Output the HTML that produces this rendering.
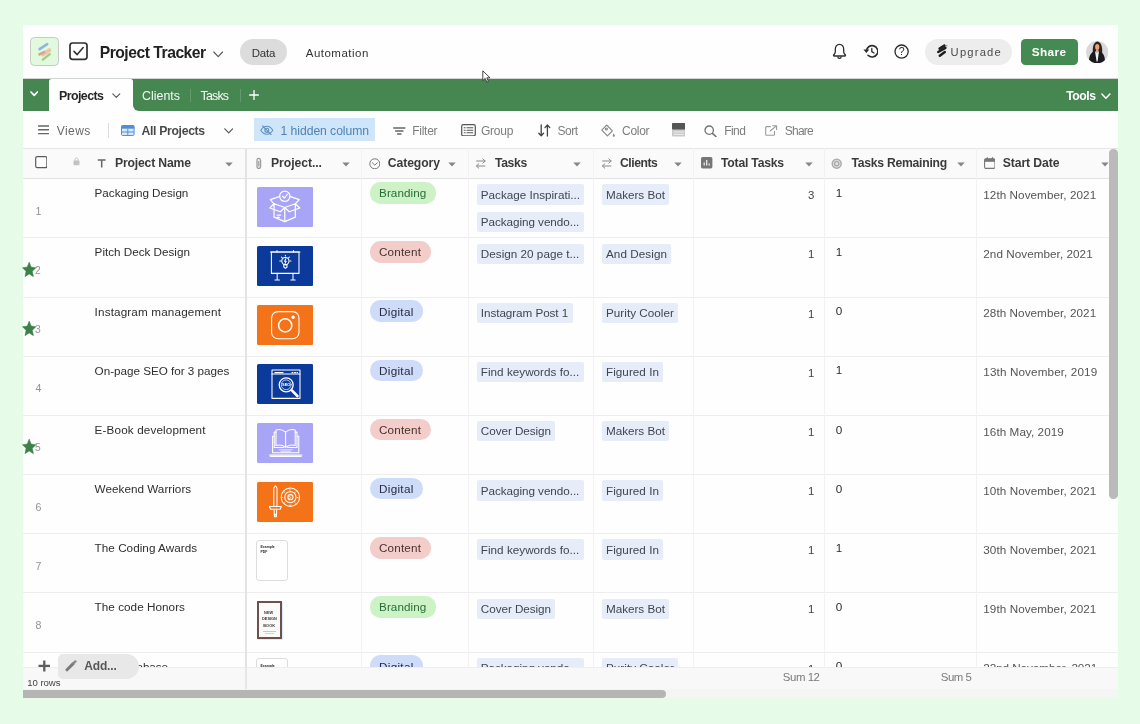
<!DOCTYPE html>
<html lang="en"><head><meta charset="utf-8"><title>Project Tracker</title>
<style>
html,body{margin:0;padding:0}
body{width:1140px;height:724px;overflow:hidden;position:relative;background:#e6fce8;font-family:"Liberation Sans",sans-serif;}
.b{position:absolute;display:block;box-sizing:border-box}
.t{position:absolute;white-space:pre;line-height:1;display:block}
#wrap{position:absolute;left:0;top:0;width:1140px;height:724px;will-change:transform}
</style></head><body><div id="wrap">
<div class="b" style="left:23.0px;top:25.0px;width:1095.4px;height:673.3px;background:#fefefe;"></div>
<div class="b" style="left:30.3px;top:36.5px;width:28.9px;height:29.0px;background:#e1f9dd;border:1.4px solid #c7cac7;border-radius:4.5px;"></div>
<svg class="b" style="left:30.3px;top:36.5px;" width="29" height="29" viewBox="0 0 29 29"><g stroke-linecap="round" fill="none"><path d="M12.8 17.6 L19.4 13.2" stroke="#f3c2a4" stroke-width="3.8"/><path d="M9.4 17.4 L14 15.2" stroke="#d9a48c" stroke-width="2.6"/><path d="M9.6 12.2 L17.2 7.2" stroke="#8fb5e6" stroke-width="2.6"/><path d="M12.8 22.6 L19.8 17.2" stroke="#9bcf88" stroke-width="2.3"/></g></svg>
<svg class="b" style="left:68.6px;top:42.2px;" width="19" height="18.6" viewBox="0 0 19 18.6"><rect x="1" y="1" width="17" height="16.4" rx="2.6" fill="none" stroke="#2f2f2f" stroke-width="1.7"/><path d="M5 9.4 L8.2 12.6 L14.2 5.6" fill="none" stroke="#2f2f2f" stroke-width="1.5" stroke-linecap="round" stroke-linejoin="round"/></svg>
<span class="t" style="left:99.7px;top:44px;font-size:15.7px;line-height:17px;color:#222;font-weight:700;letter-spacing:-0.49px;">Project Tracker</span>
<svg class="b" style="left:213.0px;top:50.5px;" width="10.4" height="7" viewBox="0 0 10.4 7"><path d="M0.8 1 L5.2 5.6 L9.6 1" fill="none" stroke="#555" stroke-width="1.1" stroke-linecap="round" stroke-linejoin="round"/></svg>
<div class="b" style="left:240.3px;top:38.8px;width:46.8px;height:26.0px;background:#dcdcdc;border-radius:13px;"></div>
<span class="t" style="left:251.7px;top:47px;font-size:11.5px;line-height:12px;color:#333;letter-spacing:-0.23px;">Data</span>
<span class="t" style="left:305.8px;top:47px;font-size:11.5px;line-height:12px;color:#333;letter-spacing:0.48px;">Automation</span>
<svg class="b" style="left:832.0px;top:42.5px;" width="15" height="16.6" viewBox="0 0 15 16.6"><path d="M7.5 1.4 C4.6 1.4 3.3 3.8 3.3 6.4 L3.3 9 C3.3 10.4 2.3 11 1.6 12 C1.3 12.6 1.6 13 2.2 13 L12.8 13 C13.4 13 13.7 12.6 13.4 12 C12.7 11 11.7 10.4 11.7 9 L11.7 6.4 C11.7 3.8 10.4 1.4 7.5 1.4 Z" fill="none" stroke="#2c2c2c" stroke-width="1.3" stroke-linejoin="round"/><path d="M5.8 13.4 C5.8 14.6 6.6 15.4 7.5 15.4 C8.4 15.4 9.2 14.6 9.2 13.4" fill="none" stroke="#2c2c2c" stroke-width="1.3"/></svg>
<svg class="b" style="left:862.8px;top:43.6px;" width="15.4" height="14.6" viewBox="0 0 15.4 14.6"><path d="M3.4 7.2 A5.7 5.7 0 1 1 5 11.3" fill="none" stroke="#2c2c2c" stroke-width="1.6" stroke-linecap="round"/><path d="M0.4 5.6 L3.4 9 L6.3 5.6 Z" fill="#2c2c2c"/><path d="M8.8 4.4 L8.8 7.6 L11 9" fill="none" stroke="#2c2c2c" stroke-width="1.3" stroke-linecap="round" stroke-linejoin="round"/></svg>
<svg class="b" style="left:894.0px;top:44.2px;" width="15.2" height="15.2" viewBox="0 0 15.2 15.2"><circle cx="7.6" cy="7.6" r="6.6" fill="none" stroke="#2c2c2c" stroke-width="1.3"/><text x="7.6" y="11.2" font-size="10.6" text-anchor="middle" fill="#2c2c2c" font-family="Liberation Sans, sans-serif">?</text></svg>
<div class="b" style="left:925.0px;top:38.8px;width:87.4px;height:26.2px;background:#ededed;border-radius:13px;"></div>
<svg class="b" style="left:936.0px;top:43.0px;" width="12.4" height="14.6" viewBox="0 0 12.4 14.6"><g stroke="#1e1e1e" stroke-width="2.5" stroke-linecap="round"><path d="M3.6 5.6 L8.4 2.6"/><path d="M2.2 9 L9.4 4.8"/><path d="M3.8 12.8 L8.8 9"/></g><circle cx="10.8" cy="2.8" r="0.5" fill="#1e1e1e"/></svg>
<span class="t" style="left:950.6px;top:46px;font-size:11.2px;line-height:12px;color:#4a4a4a;letter-spacing:1.21px;">Upgrade</span>
<div class="b" style="left:1020.5px;top:39.2px;width:57.7px;height:25.4px;background:#448a52;border-radius:4.5px;"></div>
<span class="t" style="left:1031.8px;top:45px;font-size:11.8px;line-height:14px;color:#fff;font-weight:700;letter-spacing:0.35px;">Share</span>
<svg class="b" style="left:1086.3px;top:40.5px;" width="22.4" height="22.4" viewBox="0 0 22.4 22.4"><defs><clipPath id="av"><circle cx="11.2" cy="11.2" r="11.1"/></clipPath></defs>
<g clip-path="url(#av)"><rect width="22.4" height="22.4" fill="#d9d9d9"/>
<path d="M7 13.4 C6.2 8 7 0.8 11.4 0.5 C15.8 0.8 16.8 8 16 13.4 Z" fill="#2b2321"/>
<ellipse cx="11.2" cy="5.9" rx="2.1" ry="2.9" fill="#e9a574"/>
<path d="M10 8.4 H12.4 V11 H10 Z" fill="#e2a77f"/>
<path d="M3 22.4 C2.6 14.6 5 11.2 8.8 10.2 L11 13 L13.2 10.2 C17 11.2 19.4 14.6 19 22.4 Z" fill="#1b1b1d"/>
<path d="M9 10.2 L10.6 20.4 L11.6 20.4 L13 10.2 L11 11.4 Z" fill="#f2f2f2"/></g></svg>
<div class="b" style="left:23.0px;top:78.2px;width:1095.4px;height:1.0px;background:#d2d6d2;"></div>
<div class="b" style="left:23.0px;top:78.8px;width:1095.4px;height:32.4px;background:#468650;"></div>
<div class="b" style="left:48.8px;top:79.3px;width:83.8px;height:32.0px;background:#fefefe;border-radius:2.5px 2.5px 0 0;"></div>
<div class="b" style="left:132.6px;top:105.2px;width:6.0px;height:6.0px;background:#fefefe;"></div>
<div class="b" style="left:132.6px;top:105.2px;width:6.0px;height:6.0px;background:#468650;border-bottom-left-radius:6px;"></div>
<svg class="b" style="left:30.1px;top:91.0px;" width="8.4" height="6" viewBox="0 0 8.4 6"><path d="M1 1 L4.2 4.4 L7.4 1" fill="none" stroke="#fff" stroke-width="1.7" stroke-linecap="round" stroke-linejoin="round"/></svg>
<span class="t" style="left:59.0px;top:89px;font-size:12.4px;line-height:14px;color:#262626;font-weight:700;letter-spacing:-0.56px;">Projects</span>
<svg class="b" style="left:112.0px;top:92.8px;" width="8.6" height="5.6" viewBox="0 0 8.6 5.6"><path d="M0.8 0.8 L4.3 4.4 L7.8 0.8" fill="none" stroke="#555" stroke-width="1.1" stroke-linecap="round" stroke-linejoin="round"/></svg>
<span class="t" style="left:142.0px;top:89px;font-size:12.4px;line-height:14px;color:#f4faf5;letter-spacing:0.02px;">Clients</span>
<div class="b" style="left:189.6px;top:89.0px;width:1.0px;height:13.0px;background:rgba(255,255,255,0.16);"></div>
<span class="t" style="left:200.5px;top:89px;font-size:12.4px;line-height:14px;color:#f4faf5;letter-spacing:-0.80px;">Tasks</span>
<div class="b" style="left:239.6px;top:89.0px;width:1.0px;height:13.0px;background:rgba(255,255,255,0.16);"></div>
<svg class="b" style="left:249.0px;top:90.4px;" width="10" height="10" viewBox="0 0 10 10"><path d="M5 0.6 L5 9.4 M0.6 5 L9.4 5" stroke="#fff" stroke-width="1.3" stroke-linecap="round"/></svg>
<span class="t" style="left:1066.3px;top:89px;font-size:12.2px;line-height:14px;color:#fff;font-weight:700;letter-spacing:-0.48px;">Tools</span>
<svg class="b" style="left:1101.2px;top:93.2px;" width="9.8" height="6.6" viewBox="0 0 9.8 6.6"><path d="M0.9 1 L4.9 5.2 L8.9 1" fill="none" stroke="#fff" stroke-width="1.5" stroke-linecap="round" stroke-linejoin="round"/></svg>
<svg class="b" style="left:37.6px;top:125.4px;" width="11.6" height="9.6" viewBox="0 0 11.6 9.6"><path d="M0.6 1 H11 M0.6 4.8 H11 M0.6 8.6 H11" stroke="#666" stroke-width="1.4" stroke-linecap="round"/></svg>
<span class="t" style="left:56.7px;top:124px;font-size:12px;line-height:14px;color:#6a6a6a;letter-spacing:0.45px;">Views</span>
<div class="b" style="left:108.4px;top:122.5px;width:1.0px;height:15.0px;background:#dcdcdc;"></div>
<svg class="b" style="left:121.0px;top:124.8px;" width="13.6" height="11" viewBox="0 0 13.6 11"><rect x="0.5" y="0.5" width="12.6" height="10" rx="1.2" fill="#dbeafa" stroke="#4f8fd6" stroke-width="1"/><rect x="0.5" y="0.5" width="12.6" height="3.2" fill="#4f8fd6"/><path d="M6.8 3.6 V10.4 M0.6 7 H13" stroke="#4f8fd6" stroke-width="1"/></svg>
<span class="t" style="left:141.5px;top:124px;font-size:12.2px;line-height:14px;color:#4a4a4a;font-weight:700;letter-spacing:-0.31px;">All Projects</span>
<svg class="b" style="left:223.6px;top:127.6px;" width="9.4" height="6" viewBox="0 0 9.4 6"><path d="M0.8 0.8 L4.7 4.8 L8.6 0.8" fill="none" stroke="#555" stroke-width="1.2" stroke-linecap="round" stroke-linejoin="round"/></svg>
<div class="b" style="left:253.9px;top:118.4px;width:121.6px;height:23.0px;background:#cfe5f9;"></div>
<svg class="b" style="left:260.4px;top:124.6px;" width="13.6" height="10.4" viewBox="0 0 13.6 10.4"><g fill="none" stroke="#5b8fc0" stroke-width="1.1" stroke-linecap="round"><path d="M0.8 5.2 C2.6 2.2 5 1.2 6.8 1.2 C8.6 1.2 11 2.2 12.8 5.2 C11 8.2 8.6 9.2 6.8 9.2 C5 9.2 2.6 8.2 0.8 5.2 Z"/><circle cx="6.8" cy="5.2" r="2"/><path d="M2.6 0.8 L11.2 9.8"/></g></svg>
<span class="t" style="left:280.6px;top:124px;font-size:12.2px;line-height:14px;color:#4e84b6;letter-spacing:-0.07px;">1 hidden column</span>
<svg class="b" style="left:393.0px;top:126.8px;" width="12.6" height="8" viewBox="0 0 12.6 8"><path d="M0.7 1 H11.9 M2.6 4 H10 M4.6 7 H8" stroke="#666" stroke-width="1.3" stroke-linecap="round"/></svg>
<span class="t" style="left:412.2px;top:124px;font-size:12px;line-height:14px;color:#7d7d7d;letter-spacing:-0.25px;">Filter</span>
<svg class="b" style="left:460.6px;top:123.8px;" width="15" height="12.6" viewBox="0 0 15 12.6"><rect x="0.7" y="0.7" width="13.6" height="11.2" rx="1.6" fill="none" stroke="#555" stroke-width="1.2"/><path d="M3.2 3.8 H4.2 M3.2 6.3 H4.2 M3.2 8.8 H4.2 M6 3.8 H11.8 M6 6.3 H11.8 M6 8.8 H11.8" stroke="#555" stroke-width="1.1" stroke-linecap="round"/></svg>
<span class="t" style="left:481.0px;top:124px;font-size:12px;line-height:14px;color:#7d7d7d;letter-spacing:-0.24px;">Group</span>
<svg class="b" style="left:538.2px;top:123.8px;" width="13" height="13" viewBox="0 0 13 13"><g fill="none" stroke="#444" stroke-width="1.3" stroke-linecap="round" stroke-linejoin="round"><path d="M3.2 0.8 V11.6 M0.8 9.2 L3.2 11.8 L5.6 9.2"/><path d="M9.4 12 V1.2 M7 3.6 L9.4 1 L11.8 3.6"/></g></svg>
<span class="t" style="left:557.6px;top:124px;font-size:12px;line-height:14px;color:#7d7d7d;letter-spacing:-0.54px;">Sort</span>
<svg class="b" style="left:600.6px;top:123.6px;" width="14.6" height="13" viewBox="0 0 14.6 13"><g fill="none" stroke="#858585" stroke-width="1.1" stroke-linejoin="round"><path d="M5.6 1 L11.4 6.8 L6.4 11.8 L0.8 6.2 Z"/><circle cx="5.4" cy="5" r="1"/></g><path d="M12.6 9.2 C13.6 10.6 13.8 11.4 13.8 11.8 C13.8 12.4 13.3 12.8 12.8 12.8 C12.2 12.8 11.8 12.4 11.8 11.8 C11.8 11.4 12 10.6 12.6 9.2 Z" fill="#858585"/></svg>
<span class="t" style="left:622.0px;top:124px;font-size:12px;line-height:14px;color:#7d7d7d;letter-spacing:-0.29px;">Color</span>
<svg class="b" style="left:671.8px;top:123.0px;" width="13.4" height="13.6" viewBox="0 0 13.4 13.6"><rect x="0" y="0" width="13.4" height="13.6" rx="1" fill="#c9c9c9"/><rect x="0" y="0" width="13.4" height="6.6" rx="1" fill="#555"/><path d="M1.6 9 H11.8 M1.6 11.4 H11.8" stroke="#efefef" stroke-width="1"/></svg>
<svg class="b" style="left:704.2px;top:124.6px;" width="13" height="12.4" viewBox="0 0 13 12.4"><circle cx="5.2" cy="5.2" r="4.2" fill="none" stroke="#727272" stroke-width="1.3"/><path d="M8.4 8.4 L12 11.6" stroke="#727272" stroke-width="1.5" stroke-linecap="round"/></svg>
<span class="t" style="left:724.3px;top:124px;font-size:12px;line-height:14px;color:#7d7d7d;letter-spacing:-0.61px;">Find</span>
<svg class="b" style="left:765.4px;top:125.2px;" width="12.4" height="11" viewBox="0 0 12.4 11"><g fill="none" stroke="#9a9a9a" stroke-width="1.1" stroke-linecap="round" stroke-linejoin="round"><path d="M5.4 1.6 H1.6 C1 1.6 0.7 2 0.7 2.6 V9.4 C0.7 10 1 10.3 1.6 10.3 H8.6 C9.2 10.3 9.5 10 9.5 9.4 V6.4"/><path d="M5.2 6 L11.4 0.8 M7.8 0.7 H11.6 V4.4"/></g></svg>
<span class="t" style="left:784.7px;top:124px;font-size:12px;line-height:14px;color:#7d7d7d;letter-spacing:-0.73px;">Share</span>
<div class="b" style="left:23.0px;top:148.3px;width:1095.4px;height:30.9px;background:#fafafa;border-top:1px solid #e6e6e6;border-bottom:1px solid #e2e2e2;"></div>
<div class="b" style="left:23.0px;top:237.4px;width:1095.4px;height:1.0px;background:#eeeeee;"></div>
<div class="b" style="left:23.0px;top:296.5px;width:1095.4px;height:1.0px;background:#eeeeee;"></div>
<div class="b" style="left:23.0px;top:355.7px;width:1095.4px;height:1.0px;background:#eeeeee;"></div>
<div class="b" style="left:23.0px;top:414.8px;width:1095.4px;height:1.0px;background:#eeeeee;"></div>
<div class="b" style="left:23.0px;top:474.0px;width:1095.4px;height:1.0px;background:#eeeeee;"></div>
<div class="b" style="left:23.0px;top:533.2px;width:1095.4px;height:1.0px;background:#eeeeee;"></div>
<div class="b" style="left:23.0px;top:592.3px;width:1095.4px;height:1.0px;background:#eeeeee;"></div>
<div class="b" style="left:23.0px;top:651.5px;width:1095.4px;height:1.0px;background:#eeeeee;"></div>
<div class="b" style="left:245.0px;top:148.3px;width:2.0px;height:518.9px;background:#e3e3e3;"></div>
<div class="b" style="left:361.1px;top:148.3px;width:1.0px;height:518.9px;background:#f2f2f2;"></div>
<div class="b" style="left:467.5px;top:148.3px;width:1.0px;height:518.9px;background:#f2f2f2;"></div>
<div class="b" style="left:592.7px;top:148.3px;width:1.0px;height:518.9px;background:#f2f2f2;"></div>
<div class="b" style="left:693.1px;top:148.3px;width:1.0px;height:518.9px;background:#f2f2f2;"></div>
<div class="b" style="left:823.8px;top:148.3px;width:1.0px;height:518.9px;background:#f2f2f2;"></div>
<div class="b" style="left:975.5px;top:148.3px;width:1.0px;height:518.9px;background:#f2f2f2;"></div>
<svg class="b" style="left:34.6px;top:156.4px;" width="12.6" height="12.4" viewBox="0 0 12.6 12.4"><rect x="0.7" y="0.7" width="11.2" height="11" rx="1.6" fill="#fff" stroke="#5a5a5a" stroke-width="1.2"/></svg>
<svg class="b" style="left:73.4px;top:157.2px;" width="7" height="8.6" viewBox="0 0 7 8.6"><rect x="0.5" y="3.6" width="6" height="4.6" rx="0.8" fill="#c2c2c2"/><path d="M2 3.8 V2.6 C2 1.5 2.7 1 3.5 1 C4.3 1 5 1.5 5 2.6 V3.8" fill="none" stroke="#c2c2c2" stroke-width="1"/></svg>
<svg class="b" style="left:97.0px;top:158.6px;" width="9.4" height="9" viewBox="0 0 9.4 9"><path d="M0.8 1 H8.6 M4.7 1 V8.6" stroke="#666" stroke-width="1.5" fill="none"/></svg>
<span class="t" style="left:115.0px;top:156px;font-size:12.2px;line-height:14px;color:#3b3b3b;font-weight:700;letter-spacing:-0.18px;">Project Name</span>
<svg class="b" style="left:225.0px;top:162.2px;" width="8" height="5" viewBox="0 0 8 5"><path d="M0.3 0.6 L7.7 0.6 L4 4.6 Z" fill="#858585"/></svg>
<svg class="b" style="left:255.4px;top:156.8px;" width="7.6" height="13" viewBox="0 0 7.6 13"><path d="M5.6 3.6 V9.2 C5.6 10.6 4.8 11.4 3.8 11.4 C2.8 11.4 2 10.6 2 9.2 V3.4 C2 2.2 2.7 1.4 3.7 1.4 C4.7 1.4 5.4 2.2 5.4 3.4 M3.8 4.4 V9" fill="none" stroke="#9a9a9a" stroke-width="1.25" stroke-linecap="round"/></svg>
<span class="t" style="left:271.0px;top:156px;font-size:12.2px;line-height:14px;color:#3b3b3b;font-weight:700;letter-spacing:-0.06px;">Project...</span>
<svg class="b" style="left:341.6px;top:162.2px;" width="8" height="5" viewBox="0 0 8 5"><path d="M0.3 0.6 L7.7 0.6 L4 4.6 Z" fill="#858585"/></svg>
<svg class="b" style="left:368.6px;top:157.6px;" width="11.6" height="11.6" viewBox="0 0 11.6 11.6"><circle cx="5.8" cy="5.8" r="5" fill="none" stroke="#777" stroke-width="1"/><path d="M3.4 4.8 L5.8 7.2 L8.2 4.8" fill="none" stroke="#777" stroke-width="1" stroke-linecap="round" stroke-linejoin="round"/></svg>
<span class="t" style="left:387.8px;top:156px;font-size:12.2px;line-height:14px;color:#3b3b3b;font-weight:700;letter-spacing:-0.10px;">Category</span>
<svg class="b" style="left:447.6px;top:162.2px;" width="8" height="5" viewBox="0 0 8 5"><path d="M0.3 0.6 L7.7 0.6 L4 4.6 Z" fill="#858585"/></svg>
<svg class="b" style="left:475.0px;top:157.6px;" width="11.6" height="11" viewBox="0 0 11.6 11"><g fill="none" stroke="#8a8a8a" stroke-width="1" stroke-linecap="round" stroke-linejoin="round"><path d="M1.6 3 H10 M7.8 0.8 L10.2 3 L7.8 5.2"/><path d="M10 8 H1.6 M3.8 5.8 L1.4 8 L3.8 10.2"/></g></svg>
<span class="t" style="left:495.0px;top:156px;font-size:12.2px;line-height:14px;color:#3b3b3b;font-weight:700;letter-spacing:-0.35px;">Tasks</span>
<svg class="b" style="left:573.0px;top:162.2px;" width="8" height="5" viewBox="0 0 8 5"><path d="M0.3 0.6 L7.7 0.6 L4 4.6 Z" fill="#858585"/></svg>
<svg class="b" style="left:600.8px;top:157.6px;" width="11.6" height="11" viewBox="0 0 11.6 11"><g fill="none" stroke="#8a8a8a" stroke-width="1" stroke-linecap="round" stroke-linejoin="round"><path d="M1.6 3 H10 M7.8 0.8 L10.2 3 L7.8 5.2"/><path d="M10 8 H1.6 M3.8 5.8 L1.4 8 L3.8 10.2"/></g></svg>
<span class="t" style="left:620.0px;top:156px;font-size:12.2px;line-height:14px;color:#3b3b3b;font-weight:700;letter-spacing:-0.46px;">Clients</span>
<svg class="b" style="left:673.6px;top:162.2px;" width="8" height="5" viewBox="0 0 8 5"><path d="M0.3 0.6 L7.7 0.6 L4 4.6 Z" fill="#858585"/></svg>
<svg class="b" style="left:701.4px;top:157.4px;" width="11.4" height="11.4" viewBox="0 0 11.4 11.4"><rect x="0" y="0" width="11.4" height="11.4" rx="1.6" fill="#767676"/><path d="M3.2 8.6 V5.6 M5.7 8.6 V3 M8.2 8.6 V6.6" stroke="#f2f2f2" stroke-width="1.2"/></svg>
<span class="t" style="left:721.0px;top:156px;font-size:12.2px;line-height:14px;color:#3b3b3b;font-weight:700;letter-spacing:-0.21px;">Total Tasks</span>
<svg class="b" style="left:804.6px;top:162.2px;" width="8" height="5" viewBox="0 0 8 5"><path d="M0.3 0.6 L7.7 0.6 L4 4.6 Z" fill="#858585"/></svg>
<svg class="b" style="left:831.4px;top:157.6px;" width="11.4" height="11.4" viewBox="0 0 11.4 11.4"><circle cx="5.7" cy="5.7" r="5.2" fill="#ababab"/><circle cx="5.7" cy="5.7" r="3.4" fill="none" stroke="#e8e8e8" stroke-width="0.9"/><circle cx="5.7" cy="5.7" r="1.4" fill="#e8e8e8"/></svg>
<span class="t" style="left:851.4px;top:156px;font-size:12.2px;line-height:14px;color:#3b3b3b;font-weight:700;letter-spacing:-0.25px;">Tasks Remaining</span>
<svg class="b" style="left:956.6px;top:162.2px;" width="8" height="5" viewBox="0 0 8 5"><path d="M0.3 0.6 L7.7 0.6 L4 4.6 Z" fill="#858585"/></svg>
<svg class="b" style="left:983.6px;top:157.2px;" width="11.6" height="12" viewBox="0 0 11.6 12"><rect x="0.6" y="1.8" width="10.4" height="9.6" rx="1.4" fill="none" stroke="#777" stroke-width="1.1"/><rect x="0.6" y="1.8" width="10.4" height="3" fill="#777"/><path d="M3.2 0.6 V2.4 M8.4 0.6 V2.4" stroke="#777" stroke-width="1.1" stroke-linecap="round"/></svg>
<span class="t" style="left:1002.7px;top:156px;font-size:12.2px;line-height:14px;color:#3b3b3b;font-weight:700;letter-spacing:-0.09px;">Start Date</span>
<svg class="b" style="left:1101.4px;top:162.2px;" width="8" height="5" viewBox="0 0 8 5"><path d="M0.3 0.6 L7.7 0.6 L4 4.6 Z" fill="#858585"/></svg>
<span class="t" style="left:35.6px;top:205px;font-size:10.6px;line-height:12px;color:#929292;">1</span>
<span class="t" style="left:94.6px;top:186px;font-size:11.7px;line-height:13px;color:#2e2e2e;letter-spacing:-0.03px;">Packaging Design</span>
<div class="b" style="left:370.0px;top:182.1px;width:66.0px;height:21.6px;background:#cdf2c5;border-radius:10.7px;"></div>
<span class="t" style="left:379.0px;top:186px;font-size:11.7px;line-height:13px;color:#2a6e37;letter-spacing:0.08px;">Branding</span>
<div class="b" style="left:476.7px;top:184.4px;width:107.7px;height:20.4px;background:#e7edf8;border-radius:2px;"></div>
<span class="t" style="left:480.8px;top:188px;font-size:11.7px;line-height:13px;color:#3f4652;letter-spacing:-0.01px;">Package Inspirati...</span>
<div class="b" style="left:476.7px;top:212.1px;width:107.0px;height:20.4px;background:#e7edf8;border-radius:2px;"></div>
<span class="t" style="left:480.8px;top:215px;font-size:11.7px;line-height:13px;color:#3f4652;letter-spacing:-0.05px;">Packaging vendo...</span>
<div class="b" style="left:601.7px;top:184.4px;width:67.6px;height:20.4px;background:#e7edf8;border-radius:2px;"></div>
<span class="t" style="left:606.0px;top:188px;font-size:11.7px;line-height:13px;color:#3f4652;letter-spacing:-0.02px;">Makers Bot</span>
<span class="t" style="left:807.9px;top:189px;font-size:11.4px;line-height:12px;color:#444;">3</span>
<span class="t" style="left:835.8px;top:186px;font-size:11.7px;line-height:13px;color:#2e2e2e;">1</span>
<span class="t" style="left:983.3px;top:188px;font-size:11.7px;line-height:13px;color:#555;letter-spacing:0.06px;">12th November, 2021</span>
<svg class="b" style="left:22.2px;top:261.8px;" width="14.4" height="15.4" viewBox="0 0 14.4 15.4"><path d="M7.20 0.06 L9.17 5.07 L14.00 5.64 L10.39 9.31 L11.40 14.67 L7.20 11.92 L3.00 14.67 L4.01 9.31 L0.40 5.64 L5.23 5.07 Z" fill="#3c8248" stroke="#3c8248" stroke-width="0.5" stroke-linejoin="round"/></svg>
<span class="t" style="left:35.1px;top:265px;font-size:10.3px;line-height:11px;color:#949494;">2</span>
<span class="t" style="left:94.6px;top:245px;font-size:11.7px;line-height:13px;color:#2e2e2e;letter-spacing:-0.01px;">Pitch Deck Design</span>
<div class="b" style="left:370.0px;top:241.3px;width:61.0px;height:21.6px;background:#f2cdc9;border-radius:10.7px;"></div>
<span class="t" style="left:379.0px;top:245px;font-size:11.7px;line-height:13px;color:#4a302d;letter-spacing:0.17px;">Content</span>
<div class="b" style="left:476.7px;top:243.6px;width:107.0px;height:20.4px;background:#e7edf8;border-radius:2px;"></div>
<span class="t" style="left:480.8px;top:247px;font-size:11.7px;line-height:13px;color:#3f4652;letter-spacing:0.02px;">Design 20 page t...</span>
<div class="b" style="left:601.7px;top:243.6px;width:69.6px;height:20.4px;background:#e7edf8;border-radius:2px;"></div>
<span class="t" style="left:606.0px;top:247px;font-size:11.7px;line-height:13px;color:#3f4652;letter-spacing:0.06px;">And Design</span>
<span class="t" style="left:807.9px;top:248px;font-size:11.4px;line-height:12px;color:#444;">1</span>
<span class="t" style="left:835.8px;top:245px;font-size:11.7px;line-height:13px;color:#2e2e2e;">1</span>
<span class="t" style="left:983.3px;top:247px;font-size:11.7px;line-height:13px;color:#555;letter-spacing:0.05px;">2nd November, 2021</span>
<svg class="b" style="left:22.2px;top:320.9px;" width="14.4" height="15.4" viewBox="0 0 14.4 15.4"><path d="M7.20 0.06 L9.17 5.07 L14.00 5.64 L10.39 9.31 L11.40 14.67 L7.20 11.92 L3.00 14.67 L4.01 9.31 L0.40 5.64 L5.23 5.07 Z" fill="#3c8248" stroke="#3c8248" stroke-width="0.5" stroke-linejoin="round"/></svg>
<span class="t" style="left:35.1px;top:324px;font-size:10.3px;line-height:11px;color:#949494;">3</span>
<span class="t" style="left:94.6px;top:305px;font-size:11.7px;line-height:13px;color:#2e2e2e;letter-spacing:0.15px;">Instagram management</span>
<div class="b" style="left:370.0px;top:300.4px;width:52.8px;height:21.6px;background:#cedbf9;border-radius:10.7px;"></div>
<span class="t" style="left:379.0px;top:305px;font-size:11.7px;line-height:13px;color:#252c3f;letter-spacing:0.30px;">Digital</span>
<div class="b" style="left:476.7px;top:302.7px;width:96.0px;height:20.4px;background:#e7edf8;border-radius:2px;"></div>
<span class="t" style="left:480.8px;top:306px;font-size:11.7px;line-height:13px;color:#3f4652;letter-spacing:-0.06px;">Instagram Post 1</span>
<div class="b" style="left:601.7px;top:302.7px;width:76.6px;height:20.4px;background:#e7edf8;border-radius:2px;"></div>
<span class="t" style="left:606.0px;top:306px;font-size:11.7px;line-height:13px;color:#3f4652;letter-spacing:0.03px;">Purity Cooler</span>
<span class="t" style="left:807.9px;top:308px;font-size:11.4px;line-height:12px;color:#444;">1</span>
<span class="t" style="left:835.8px;top:304px;font-size:11.7px;line-height:13px;color:#2e2e2e;">0</span>
<span class="t" style="left:983.3px;top:306px;font-size:11.7px;line-height:13px;color:#555;letter-spacing:0.06px;">28th November, 2021</span>
<span class="t" style="left:35.6px;top:382px;font-size:10.6px;line-height:12px;color:#929292;">4</span>
<span class="t" style="left:94.6px;top:364px;font-size:11.7px;line-height:13px;color:#2e2e2e;letter-spacing:-0.02px;">On-page SEO for 3 pages</span>
<div class="b" style="left:370.0px;top:359.6px;width:52.8px;height:21.6px;background:#cedbf9;border-radius:10.7px;"></div>
<span class="t" style="left:379.0px;top:364px;font-size:11.7px;line-height:13px;color:#252c3f;letter-spacing:0.30px;">Digital</span>
<div class="b" style="left:476.7px;top:361.9px;width:107.0px;height:20.4px;background:#e7edf8;border-radius:2px;"></div>
<span class="t" style="left:480.8px;top:365px;font-size:11.7px;line-height:13px;color:#3f4652;letter-spacing:0.02px;">Find keywords fo...</span>
<div class="b" style="left:601.7px;top:361.9px;width:61.6px;height:20.4px;background:#e7edf8;border-radius:2px;"></div>
<span class="t" style="left:606.0px;top:365px;font-size:11.7px;line-height:13px;color:#3f4652;letter-spacing:0.04px;">Figured In</span>
<span class="t" style="left:807.9px;top:367px;font-size:11.4px;line-height:12px;color:#444;">1</span>
<span class="t" style="left:835.8px;top:363px;font-size:11.7px;line-height:13px;color:#2e2e2e;">1</span>
<span class="t" style="left:983.3px;top:365px;font-size:11.7px;line-height:13px;color:#555;letter-spacing:0.12px;">13th November, 2019</span>
<svg class="b" style="left:22.2px;top:439.2px;" width="14.4" height="15.4" viewBox="0 0 14.4 15.4"><path d="M7.20 0.06 L9.17 5.07 L14.00 5.64 L10.39 9.31 L11.40 14.67 L7.20 11.92 L3.00 14.67 L4.01 9.31 L0.40 5.64 L5.23 5.07 Z" fill="#3c8248" stroke="#3c8248" stroke-width="0.5" stroke-linejoin="round"/></svg>
<span class="t" style="left:35.1px;top:442px;font-size:10.3px;line-height:11px;color:#949494;">5</span>
<span class="t" style="left:94.6px;top:423px;font-size:11.7px;line-height:13px;color:#2e2e2e;letter-spacing:0.14px;">E-Book development</span>
<div class="b" style="left:370.0px;top:418.7px;width:61.0px;height:21.6px;background:#f2cdc9;border-radius:10.7px;"></div>
<span class="t" style="left:379.0px;top:423px;font-size:11.7px;line-height:13px;color:#4a302d;letter-spacing:0.17px;">Content</span>
<div class="b" style="left:476.7px;top:421.0px;width:78.7px;height:20.4px;background:#e7edf8;border-radius:2px;"></div>
<span class="t" style="left:480.8px;top:424px;font-size:11.7px;line-height:13px;color:#3f4652;letter-spacing:-0.05px;">Cover Design</span>
<div class="b" style="left:601.7px;top:421.0px;width:67.6px;height:20.4px;background:#e7edf8;border-radius:2px;"></div>
<span class="t" style="left:606.0px;top:424px;font-size:11.7px;line-height:13px;color:#3f4652;letter-spacing:-0.02px;">Makers Bot</span>
<span class="t" style="left:807.9px;top:426px;font-size:11.4px;line-height:12px;color:#444;">1</span>
<span class="t" style="left:835.8px;top:423px;font-size:11.7px;line-height:13px;color:#2e2e2e;">0</span>
<span class="t" style="left:983.3px;top:425px;font-size:11.7px;line-height:13px;color:#555;letter-spacing:0.06px;">16th May, 2019</span>
<span class="t" style="left:35.6px;top:501px;font-size:10.6px;line-height:12px;color:#929292;">6</span>
<span class="t" style="left:94.6px;top:482px;font-size:11.7px;line-height:13px;color:#2e2e2e;letter-spacing:0.03px;">Weekend Warriors</span>
<div class="b" style="left:370.0px;top:477.9px;width:52.8px;height:21.6px;background:#cedbf9;border-radius:10.7px;"></div>
<span class="t" style="left:379.0px;top:482px;font-size:11.7px;line-height:13px;color:#252c3f;letter-spacing:0.30px;">Digital</span>
<div class="b" style="left:476.7px;top:480.2px;width:107.0px;height:20.4px;background:#e7edf8;border-radius:2px;"></div>
<span class="t" style="left:480.8px;top:484px;font-size:11.7px;line-height:13px;color:#3f4652;letter-spacing:-0.05px;">Packaging vendo...</span>
<div class="b" style="left:601.7px;top:480.2px;width:61.6px;height:20.4px;background:#e7edf8;border-radius:2px;"></div>
<span class="t" style="left:606.0px;top:484px;font-size:11.7px;line-height:13px;color:#3f4652;letter-spacing:0.04px;">Figured In</span>
<span class="t" style="left:807.9px;top:485px;font-size:11.4px;line-height:12px;color:#444;">1</span>
<span class="t" style="left:835.8px;top:482px;font-size:11.7px;line-height:13px;color:#2e2e2e;">0</span>
<span class="t" style="left:983.3px;top:484px;font-size:11.7px;line-height:13px;color:#555;letter-spacing:0.07px;">10th November, 2021</span>
<span class="t" style="left:35.6px;top:560px;font-size:10.6px;line-height:12px;color:#929292;">7</span>
<span class="t" style="left:94.6px;top:541px;font-size:11.7px;line-height:13px;color:#2e2e2e;letter-spacing:0.04px;">The Coding Awards</span>
<div class="b" style="left:370.0px;top:537.1px;width:61.0px;height:21.6px;background:#f2cdc9;border-radius:10.7px;"></div>
<span class="t" style="left:379.0px;top:541px;font-size:11.7px;line-height:13px;color:#4a302d;letter-spacing:0.17px;">Content</span>
<div class="b" style="left:476.7px;top:539.4px;width:107.0px;height:20.4px;background:#e7edf8;border-radius:2px;"></div>
<span class="t" style="left:480.8px;top:543px;font-size:11.7px;line-height:13px;color:#3f4652;letter-spacing:0.02px;">Find keywords fo...</span>
<div class="b" style="left:601.7px;top:539.4px;width:61.6px;height:20.4px;background:#e7edf8;border-radius:2px;"></div>
<span class="t" style="left:606.0px;top:543px;font-size:11.7px;line-height:13px;color:#3f4652;letter-spacing:0.04px;">Figured In</span>
<span class="t" style="left:807.9px;top:544px;font-size:11.4px;line-height:12px;color:#444;">1</span>
<span class="t" style="left:835.8px;top:541px;font-size:11.7px;line-height:13px;color:#2e2e2e;">1</span>
<span class="t" style="left:983.3px;top:543px;font-size:11.7px;line-height:13px;color:#555;letter-spacing:0.07px;">30th November, 2021</span>
<span class="t" style="left:35.6px;top:619px;font-size:10.6px;line-height:12px;color:#929292;">8</span>
<span class="t" style="left:94.6px;top:600px;font-size:11.7px;line-height:13px;color:#2e2e2e;letter-spacing:0.05px;">The code Honors</span>
<div class="b" style="left:370.0px;top:596.2px;width:66.0px;height:21.6px;background:#cdf2c5;border-radius:10.7px;"></div>
<span class="t" style="left:379.0px;top:600px;font-size:11.7px;line-height:13px;color:#2a6e37;letter-spacing:0.08px;">Branding</span>
<div class="b" style="left:476.7px;top:598.5px;width:78.7px;height:20.4px;background:#e7edf8;border-radius:2px;"></div>
<span class="t" style="left:480.8px;top:602px;font-size:11.7px;line-height:13px;color:#3f4652;letter-spacing:-0.05px;">Cover Design</span>
<div class="b" style="left:601.7px;top:598.5px;width:67.6px;height:20.4px;background:#e7edf8;border-radius:2px;"></div>
<span class="t" style="left:606.0px;top:602px;font-size:11.7px;line-height:13px;color:#3f4652;letter-spacing:-0.02px;">Makers Bot</span>
<span class="t" style="left:807.9px;top:603px;font-size:11.4px;line-height:12px;color:#444;">1</span>
<span class="t" style="left:835.8px;top:600px;font-size:11.7px;line-height:13px;color:#2e2e2e;">0</span>
<span class="t" style="left:983.3px;top:602px;font-size:11.7px;line-height:13px;color:#555;letter-spacing:0.07px;">19th November, 2021</span>
<span class="t" style="left:35.6px;top:678px;font-size:10.6px;line-height:12px;color:#929292;">9</span>
<span class="t" style="left:94.6px;top:660px;font-size:11.7px;line-height:13px;color:#2e2e2e;letter-spacing:-0.05px;">App Database</span>
<div class="b" style="left:370.0px;top:655.4px;width:52.8px;height:21.6px;background:#cedbf9;border-radius:10.7px;"></div>
<span class="t" style="left:379.0px;top:660px;font-size:11.7px;line-height:13px;color:#252c3f;letter-spacing:0.30px;">Digital</span>
<div class="b" style="left:476.7px;top:657.7px;width:107.0px;height:20.4px;background:#e7edf8;border-radius:2px;"></div>
<span class="t" style="left:480.8px;top:661px;font-size:11.7px;line-height:13px;color:#3f4652;letter-spacing:-0.05px;">Packaging vendo...</span>
<div class="b" style="left:601.7px;top:657.7px;width:76.6px;height:20.4px;background:#e7edf8;border-radius:2px;"></div>
<span class="t" style="left:606.0px;top:661px;font-size:11.7px;line-height:13px;color:#3f4652;letter-spacing:0.03px;">Purity Cooler</span>
<span class="t" style="left:807.9px;top:663px;font-size:11.4px;line-height:12px;color:#444;">1</span>
<span class="t" style="left:835.8px;top:659px;font-size:11.7px;line-height:13px;color:#2e2e2e;">0</span>
<span class="t" style="left:983.3px;top:661px;font-size:11.7px;line-height:13px;color:#555;letter-spacing:-0.06px;">22nd November, 2021</span>
<svg class="b" style="left:257.0px;top:186.5px;" width="56.4" height="40" viewBox="0 0 56.4 40"><rect width="56.4" height="40" rx="1.6" fill="#a9a5f6"/><g stroke="#fff" fill="none" stroke-width="1.05" stroke-linejoin="round" stroke-linecap="round" transform="translate(27.8 19.6) scale(1.17) translate(-28.6 -19.8)" stroke-width="0.95"><path d="M19.4 17.4 L28.6 20.6 L37.6 17.4 V28.8 L28.6 32.6 L19.4 28.8 Z"/><path d="M28.6 20.6 V32.6"/><path d="M19.4 17.4 L16.2 13.8 L24.4 11 L28.6 14.6"/><path d="M37.6 17.4 L41 13.8 L32.8 11 L28.6 14.6"/><path d="M19.4 17.4 L15.8 21 L24.8 24.2 L28.6 20.6 L32.4 24.2 L41.4 21 L37.6 17.4"/><circle cx="28.6" cy="11" r="4.4" fill="#a9a5f6"/><path d="M26.6 11 L28.2 12.6 L30.8 9.4"/><path d="M22 27 H25 M22 29 H24"/></g></svg>
<svg class="b" style="left:257.0px;top:245.7px;" width="56.4" height="40" viewBox="0 0 56.4 40"><rect width="56.4" height="40" rx="1.6" fill="#0b3a9b"/><g stroke="#fff" fill="none" stroke-width="1.05" stroke-linejoin="round" stroke-linecap="round"><rect x="14.4" y="6" width="27.6" height="21.4"/><path d="M13.4 6 H43"/><path d="M20 4.6 V6 M36.4 4.6 V6"/><path d="M20.2 27.4 V33 M36 27.4 V33 M18 34 H22.4 M33.8 34 H38.2"/><circle cx="28.4" cy="15" r="3.6"/><path d="M26.8 18.6 H30 V21 L28.4 22.4 L26.8 21 Z"/><path d="M28.8 12.8 L27.6 15.2 H29.2 L28 17.4"/><path d="M28.4 9.2 V10 M22.8 15 H23.8 M33 15 H34 M24.4 11 L25.2 11.8 M32.4 11 L31.6 11.8"/></g></svg>
<svg class="b" style="left:257.0px;top:304.8px;" width="56.4" height="40" viewBox="0 0 56.4 40"><rect width="56.4" height="40" rx="1.6" fill="#f47318"/><g stroke="#fff" fill="none" stroke-width="1.05" stroke-linejoin="round" stroke-linecap="round" stroke-width="1.1"><rect x="14.6" y="6.6" width="27.4" height="27.2" rx="6.4"/><circle cx="28.2" cy="20.4" r="6.6" stroke-width="1.5"/></g><circle cx="36.2" cy="12.2" r="1.7" fill="#fff"/></svg>
<svg class="b" style="left:257.0px;top:364.0px;" width="56.4" height="40" viewBox="0 0 56.4 40"><rect width="56.4" height="40" rx="1.6" fill="#0b3a9b"/><g stroke="#fff" fill="none" stroke-width="1.05" stroke-linejoin="round" stroke-linecap="round"><rect x="15" y="6" width="28" height="28.4"/><path d="M15 10 H43"/><path d="M18 8.6 H26" stroke-width="1.3"/><path d="M35 8.6 H36 M37.6 8.6 H38.6 M40 8.6 H40.6"/><circle cx="29.2" cy="20.8" r="7" stroke-width="1.3"/><circle cx="29.2" cy="20.8" r="4.9" stroke-width="0.7"/><path d="M34.6 26.2 L40.4 32" stroke-width="2.6"/></g><text x="29.2" y="22.3" font-size="4" font-weight="700" fill="#fff" text-anchor="middle" font-family="Liberation Sans, sans-serif">SEO</text></svg>
<svg class="b" style="left:257.0px;top:423.1px;" width="56.4" height="40" viewBox="0 0 56.4 40"><rect width="56.4" height="40" rx="1.6" fill="#a9a5f6"/><g stroke="#fff" fill="none" stroke-width="1.05" stroke-linejoin="round" stroke-linecap="round" transform="translate(0 -0.8) scale(1 1.03)"><path d="M17 13.6 H15.6 V29.6 H41.8 V13.6 H40.4"/><path d="M12.4 31.8 H45 M13.2 33.2 H44.2" stroke-width="1.1"/><path d="M28.6 9.6 C25.6 7.2 21.6 6.8 19 7.6 V22.6 C21.6 21.8 25.6 22.2 28.6 24.4 C31.6 22.2 35.6 21.8 38.2 22.6 V7.6 C35.6 6.8 31.6 7.2 28.6 9.6 Z"/><path d="M28.6 9.6 V24.4"/><path d="M19 9.6 H17.2 V24.6 H26.6 M38.2 9.6 H40 V24.6 H30.6"/><path d="M22 26.8 H35.4 M24 28.2 H33.4" stroke-width="0.7"/></g></svg>
<svg class="b" style="left:257.0px;top:482.3px;" width="56.4" height="40" viewBox="0 0 56.4 40"><rect width="56.4" height="40" rx="1.6" fill="#f47318"/><g stroke="#fff" fill="none" stroke-width="1.05" stroke-linejoin="round" stroke-linecap="round"><path d="M16.8 6 L18.4 3.8 L20 6 V24.6 H16.8 Z"/><path d="M12.4 24.6 H24.4 L23.2 27.2 H13.6 Z"/><path d="M17.2 27.2 V32.4 H19.6 V27.2"/><path d="M17.4 33 H19.4 V34.8 H17.4 Z"/><circle cx="33.4" cy="15.2" r="9.2"/><circle cx="33.4" cy="15.2" r="5.6"/><circle cx="33.4" cy="15.2" r="2.6"/><path d="M32.2 14.4 L34.2 15.6 L32.2 16.8 Z" stroke-width="0.6"/><path d="M33 7.4 V8.4 M33 22.8 V23.8 M24.8 15.6 H25.8 M40.2 15.6 H41.2 M27.2 9.8 L27.9 10.5 M38.8 9.8 L38.1 10.5 M27.2 21.4 L27.9 20.7 M38.8 21.4 L38.1 20.7" stroke-width="0.8"/></g></svg>
<div class="b" style="left:256.0px;top:540.1px;width:32.4px;height:41.4px;background:#fff;border:1px solid #dcdcdc;border-radius:3px;"></div>
<span class="t" style="left:260.6px;top:545px;font-size:3.4px;line-height:4px;color:#222;font-weight:700;">Example</span>
<span class="t" style="left:260.6px;top:550px;font-size:3.4px;line-height:4px;color:#222;font-weight:700;">PDF</span>
<div class="b" style="left:257.4px;top:601.5px;width:25.6px;height:38.6px;background:#dfe8f6;border-radius:1px;"></div>
<div class="b" style="left:257.0px;top:600.9px;width:24.6px;height:38.6px;background:#fbfaf8;border:2.3px solid #6b524e;"></div>
<span class="t" style="left:264.1px;top:610px;font-size:3.9px;line-height:5px;color:#3a3a3a;font-weight:700;">NEW</span>
<span class="t" style="left:262.0px;top:616px;font-size:3.9px;line-height:5px;color:#3a3a3a;font-weight:700;">DESIGN</span>
<span class="t" style="left:263.3px;top:623px;font-size:3.9px;line-height:5px;color:#3a3a3a;font-weight:700;">BOOK</span>
<div class="b" style="left:262.6px;top:630.5px;width:13.4px;height:0.6px;background:#c8c8c8;"></div>
<div class="b" style="left:264.6px;top:632.5px;width:9.4px;height:0.6px;background:#d4d4d4;"></div>
<div class="b" style="left:256.0px;top:658.4px;width:32.4px;height:20.0px;background:#fff;border:1px solid #dcdcdc;border-radius:3px;"></div>
<span class="t" style="left:260.6px;top:664px;font-size:3.4px;line-height:4px;color:#222;font-weight:700;">Example</span>
<span class="t" style="left:260.6px;top:669px;font-size:3.4px;line-height:4px;color:#222;font-weight:700;">PDF</span>
<div class="b" style="left:1109.4px;top:149.2px;width:9.0px;height:350.0px;background:#bababa;border-radius:4.4px;"></div>
<div class="b" style="left:23.0px;top:667.2px;width:1095.4px;height:31.0px;background:#f8f8f8;border-top:1px solid #eeeeee;"></div>
<div class="b" style="left:245.0px;top:667.2px;width:2.0px;height:22.0px;background:#e6e6e6;"></div>
<div class="b" style="left:23.0px;top:689.4px;width:1095.4px;height:8.9px;background:#f5f5f5;"></div>
<div class="b" style="left:23.0px;top:689.6px;width:642.8px;height:8.7px;background:#b5b5b5;border-radius:0 4.4px 4.4px 0;"></div>
<span class="t" style="left:27.2px;top:677px;font-size:9.6px;line-height:11px;color:#444;letter-spacing:-0.04px;">10 rows</span>
<span class="t" style="left:782.8px;top:671px;font-size:11.4px;line-height:12px;color:#7a7a7a;letter-spacing:-0.42px;">Sum 12</span>
<span class="t" style="left:940.8px;top:671px;font-size:11.4px;line-height:12px;color:#7a7a7a;letter-spacing:-0.49px;">Sum 5</span>
<svg class="b" style="left:37.8px;top:660.2px;" width="12.6" height="11.8" viewBox="0 0 12.6 11.8"><path d="M6.3 0.4 V11.4 M0.5 5.9 H12.1" stroke="#5e5e5e" stroke-width="2.3" fill="none"/></svg>
<div class="b" style="left:58.2px;top:653.6px;width:80.4px;height:25.8px;background:#e8e8e8;border-radius:5px 12.9px 12.9px 5px;"></div>
<svg class="b" style="left:65.4px;top:660.2px;" width="12.4" height="11.6" viewBox="0 0 12.4 11.6"><path d="M2 9.8 L8.2 3.6" stroke="#7a7a7a" stroke-width="3" stroke-linecap="round"/><path d="M8.6 3.2 L10.4 1.4" stroke="#8a8a8a" stroke-width="2.4" stroke-linecap="round"/></svg>
<span class="t" style="left:84.3px;top:659px;font-size:12px;line-height:14px;color:#585858;font-weight:700;letter-spacing:-0.17px;">Add...</span>
<svg class="b" style="left:482.4px;top:69.6px;" width="9" height="13.4" viewBox="0 0 9 13.4"><path d="M0.8 0.8 L0.8 10.6 L3.2 8.4 L4.8 12.2 L6.4 11.5 L4.8 7.8 L8 7.8 Z" fill="#fff" stroke="#333" stroke-width="0.9" stroke-linejoin="round"/></svg>
</div></body></html>
